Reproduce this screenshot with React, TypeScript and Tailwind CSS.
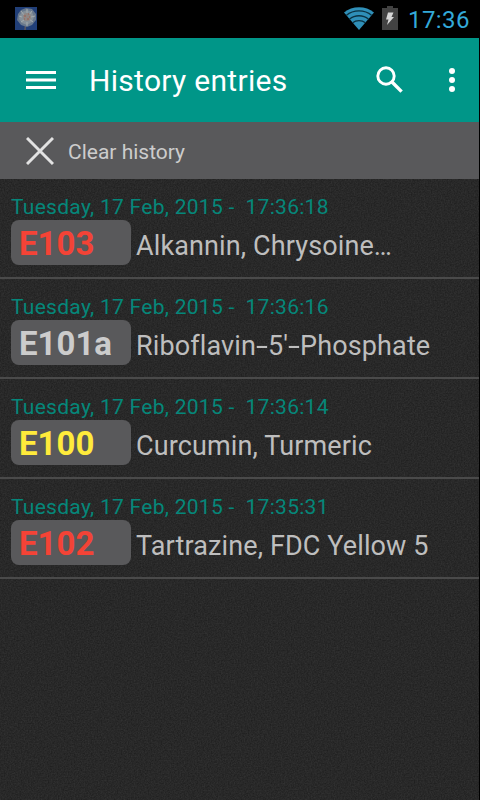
interface HistoryEntry {
  date: string
  time: string
  code: string
  name: string
  color: string
}

const ENTRIES: HistoryEntry[] = [
  { date: 'Tuesday, 17 Feb, 2015', time: '17:36:18', code: 'E103', name: 'Alkannin, Chrysoine…', color: 'text-[#f44336]' },
  { date: 'Tuesday, 17 Feb, 2015', time: '17:36:16', code: 'E101a', name: "Riboflavin-5'-Phosphate", color: 'text-[#cccccc]' },
  { date: 'Tuesday, 17 Feb, 2015', time: '17:36:14', code: 'E100', name: 'Curcumin, Turmeric', color: 'text-[#ffeb3b]' },
  { date: 'Tuesday, 17 Feb, 2015', time: '17:35:31', code: 'E102', name: 'Tartrazine, FDC Yellow 5', color: 'text-[#f44336]' },
]

// ── Icons ─────────────────────────────────────────────────────────────────────
function DandelionIcon() {
  return (
    <svg width="22" height="23" viewBox="0 0 22 23" className="block">
      <rect width="22" height="23" fill="#213f78" />
      <path d="M11 13 L10 23" stroke="#5d5960" strokeWidth="1.5" />
      <path d="M3 7 6 3l5-2 6 1 4 5v6l-4 5-5 2-6-2-4-5Z" fill="#68788d" />
      <path d="M5 8l2-3 5-2 5 2 2 5-2 5-5 3-5-2-3-4Z" fill="#858f98" />
      <path d="M4 9l3 1M6 4l3 4M12 2v4M17 4l-3 4M20 9l-4 1M18 15l-4-3M12 19v-4M6 15l3-2" stroke="#a5acae" />
      <circle cx="12" cy="10" r="4" fill="#8f8784" />
      <path d="M9 9h2M13 7h1M12 12h2M9 12h1M14 10h1" stroke="#9c5f50" />
    </svg>
  )
}

function WifiIcon() {
  return (
    <svg width="30" height="23" viewBox="0 0 30 23" className="block">
      <path d="M0 5.5C8 -1.6 22 -1.6 30 5.5L15 23Z" fill="#2f8fb8" />
      <g fill="none" stroke="#0b3141" strokeWidth="1.3">
        <path d="M2.2 8.4C9.5 2.4 20.5 2.4 27.8 8.4" />
        <path d="M5.4 12.2C11 7.6 19 7.6 24.6 12.2" />
        <path d="M8.6 15.8C12.2 12.8 17.8 12.8 21.4 15.8" />
      </g>
    </svg>
  )
}

function BatteryIcon() {
  return (
    <svg width="16" height="24" viewBox="0 0 16 24" className="block">
      <path d="M5 0h6v2h5v22H0V2h5Z" fill="#424242" />
      <path d="M6 6.5h5.5l-2 4.5H12L5 19l1.5-5.5H4Z" fill="#d6d6d6" />
    </svg>
  )
}

function MenuIcon() {
  return (
    <svg width="30" height="18" viewBox="0 0 30 18" className="block">
      <path d="M0 1.5h30M0 9h30M0 16.5h30" stroke="#fff" strokeWidth="2.8" />
    </svg>
  )
}

function SearchIcon() {
  return (
    <svg width="28" height="28" viewBox="0 0 28 28" className="block" fill="none" stroke="#fff">
      <circle cx="10" cy="10" r="8.2" strokeWidth="2.9" />
      <path d="M16 16l9.6 9.6" strokeWidth="3.4" />
    </svg>
  )
}

function MoreIcon() {
  return (
    <svg width="6" height="24" viewBox="0 0 6 24" className="block" fill="#fff">
      <circle cx="3" cy="3" r="3" />
      <circle cx="3" cy="12" r="3" />
      <circle cx="3" cy="21" r="3" />
    </svg>
  )
}

function ClearIcon() {
  return (
    <svg width="28" height="28" viewBox="0 0 28 28" className="block">
      <path d="M1 1l26 26M27 1L1 27" stroke="#e2e2e2" strokeWidth="2.9" />
    </svg>
  )
}

// Fine grain over the dark list background
function Grain() {
  return (
    <svg className="absolute inset-0 h-full w-full opacity-[0.07]">
      <filter id="grain" x="0" y="0" width="100%" height="100%" colorInterpolationFilters="sRGB">
        <feTurbulence type="fractalNoise" baseFrequency="0.7" numOctaves="2" seed="4" />
        <feColorMatrix values="1.4 0 0 0 -0.2  1.4 0 0 0 -0.2  1.4 0 0 0 -0.2  0 0 0 0 1" />
      </filter>
      <rect width="100%" height="100%" filter="url(#grain)" />
    </svg>
  )
}

// ── Bars ──────────────────────────────────────────────────────────────────────
function StatusBar() {
  return (
    <div className="flex h-[38px] shrink-0 items-start bg-black pl-[15px] pt-[7px]">
      <DandelionIcon />
      <div className="flex-1" />
      <WifiIcon />
      <div className="ml-[8px] -mt-px"><BatteryIcon /></div>
      <span className="ml-[10px] mt-px w-[71px] whitespace-nowrap text-[24px] leading-6 tracking-[0.4px] text-[#33a9d8]">17:36</span>
    </div>
  )
}

function ActionBar() {
  return (
    <header className="flex h-[84px] shrink-0 items-center bg-[#009688] pl-[26px] pr-6">
      <MenuIcon />
      <h1 className="ml-[33px] mt-0.5 whitespace-nowrap text-[30px] leading-9 tracking-[0.3px] text-white">History entries</h1>
      <div className="flex-1" />
      <SearchIcon />
      <div className="ml-[45px]"><MoreIcon /></div>
    </header>
  )
}

// Hyphens inside a name are drawn a bit wider than the font's own
function EntryName({ name }: { name: string }) {
  return (
    <span className="ml-[5px] whitespace-nowrap text-[27px] leading-[53px] tracking-[0.12px] text-[#bebebe]">
      {name.split(/(-)/).map((part, i) =>
        part === '-' ? <span key={i} className="inline-block w-[12px] origin-left scale-x-[1.6]">-</span> : part,
      )}
    </span>
  )
}

function EntryRow({ date, time, code, name, color }: HistoryEntry) {
  return (
    <li className="h-[100px] border-b-2 border-[#4a4a4a] pl-[11px] pt-[15px]">
      <p className="h-[26px] whitespace-pre text-[21px] leading-[26px] tracking-[0.28px] text-[#05877a]">{`${date} -  ${time}`}</p>
      <div className="flex h-[45px]">
        <span className={`h-[45px] w-[120px] rounded-lg bg-[#59595b] pl-2 text-[33px] font-bold leading-[48px] ${color}`}>{code}</span>
        <EntryName name={name} />
      </div>
    </li>
  )
}

export default function App() {
  return (
    <div className="flex h-[800px] w-[480px] flex-col overflow-hidden border-r border-black bg-[#222222] font-['Roboto',sans-serif]">
      <StatusBar />
      <ActionBar />
      <button className="flex h-[57px] shrink-0 items-center bg-[#59595b] pl-[26px] text-left">
        <ClearIcon />
        <span className="ml-[14px] mt-0.5 text-[21px] leading-6 text-[#cccccc]">Clear history</span>
      </button>
      <main className="relative flex-1">
        <Grain />
        <ul className="relative">
          {ENTRIES.map(e => <EntryRow key={e.time} {...e} />)}
        </ul>
      </main>
    </div>
  )
}
